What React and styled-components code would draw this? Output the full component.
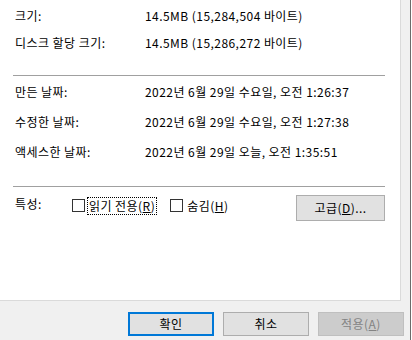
import React from 'react';
import styled, { createGlobalStyle } from 'styled-components';

const Global = createGlobalStyle`
  html, body {
    margin: 0;
    padding: 0;
    background: #ffffff;
  }
  body {
    font-family: "Noto Sans CJK KR", "Noto Sans", sans-serif;
    font-size: 12px;
    letter-spacing: 0.45px;
    color: #000;
  }
`;

const Frame = styled.div`
  width: 411px;
  height: 340px;
  box-sizing: border-box;
  background: #f0f0f0;
  border-right: 1px solid #6b6b6b;
  display: flex;
  flex-direction: column;
  overflow: hidden;
`;

const Panel = styled.div`
  width: 401px;
  height: 301px;
  flex: none;
  box-sizing: border-box;
  background: #ffffff;
  border-right: 1px solid #dadada;
  border-bottom: 1px solid #dadada;
  display: flex;
  flex-direction: column;
`;

const Section = styled.div`
  display: flex;
  flex-direction: column;
  margin-top: ${p => p.$top || 0}px;
`;

const Row = styled.div`
  display: grid;
  grid-template-columns: 130px 1fr;
  align-items: center;
  padding-left: 15px;
  height: ${p => p.$h}px;
  line-height: 16px;
  white-space: nowrap;
`;

const Divider = styled.div`
  height: 1px;
  width: 372px;
  margin: ${p => p.$top}px 0 0 13px;
  background: #a0a0a0;
`;

const AttrRow = styled.div`
  display: flex;
  align-items: flex-start;
  margin-top: 8px;
  padding-left: 15px;
  height: 26px;
`;

const AttrLabel = styled.span`
  width: 57px;
  line-height: 18px;
  flex: none;
`;

const Check = styled.label`
  display: flex;
  align-items: flex-start;
  margin-left: ${p => p.$gap || 0}px;
`;

const Box = styled.span`
  width: 13px;
  height: 13px;
  box-sizing: border-box;
  border: 1px solid #333333;
  background: #fff;
  margin-top: 4px;
  flex: none;
`;

const CheckText = styled.span`
  margin: 2px 0 0 2px;
  padding: 0 1px;
  line-height: 16px;
  border: 1px ${p => (p.$focus ? 'dotted #000' : 'solid transparent')};
  white-space: nowrap;
`;

const Button = styled.button`
  font: inherit;
  font-size: 12px;
  letter-spacing: 0.45px;
  color: ${p => (p.$disabled ? '#838383' : '#000')};
  background: ${p => (p.$disabled ? '#cccccc' : '#e1e1e1')};
  border: ${p => (p.$default ? '2px solid #0078d7' : p.$disabled ? '1px solid #bfbfbf' : '1px solid #adadad')};
  width: ${p => p.$w}px;
  height: ${p => p.$h}px;
  padding: 0;
  line-height: 16px;
  box-sizing: border-box;
  flex: none;
  border-radius: 0;
`;

const AdvButton = styled(Button)`
  margin-left: auto;
  margin-right: 15px;
`;

const Footer = styled.div`
  display: flex;
  justify-content: flex-end;
  gap: 9px;
  padding: 11px 6px 0 0;
`;

const topRows = [
  ['크기:', '14.5MB (15,284,504 바이트)'],
  ['디스크 할당 크기:', '14.5MB (15,286,272 바이트)'],
];

const dateRows = [
  ['만든 날짜:', '2022년 6월 29일 수요일, 오전 1:26:37'],
  ['수정한 날짜:', '2022년 6월 29일 수요일, 오전 1:27:38'],
  ['액세스한 날짜:', '2022년 6월 29일 오늘, 오전 1:35:51'],
];

export default function App() {
  return (
    <>
      <Global />
      <Frame>
        <Panel>
          <Section $top={2}>
            {topRows.map(([k, v]) => (
              <Row key={k} $h={27}>
                <span>{k}</span>
                <span>{v}</span>
              </Row>
            ))}
          </Section>
          <Divider $top={19} />
          <Section $top={1}>
            {dateRows.map(([k, v]) => (
              <Row key={k} $h={30}>
                <span>{k}</span>
                <span>{v}</span>
              </Row>
            ))}
          </Section>
          <Divider $top={19} />
          <AttrRow>
            <AttrLabel>특성:</AttrLabel>
            <Check>
              <Box />
              <CheckText $focus>읽기 전용(<u>R</u>)</CheckText>
            </Check>
            <Check $gap={13}>
              <Box />
              <CheckText>숨김(<u>H</u>)</CheckText>
            </Check>
            <AdvButton $w={89} $h={26}>고급(<u>D</u>)...</AdvButton>
          </AttrRow>
        </Panel>
        <Footer>
          <Button $default $w={86} $h={24}>확인</Button>
          <Button $w={86} $h={24}>취소</Button>
          <Button $disabled $w={86} $h={24}>적용(<u>A</u>)</Button>
        </Footer>
      </Frame>
    </>
  );
}
